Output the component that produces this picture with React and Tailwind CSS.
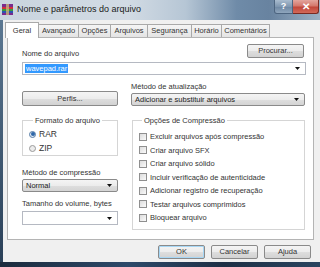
const Arrow = () => (
  <svg width="5" height="3" viewBox="0 0 5 3" className="shrink-0">
    <path d="M0 0H5L2.5 3Z" fill="#111" />
  </svg>
);

const Btn = ({ children, className = "" }) => (
  <div
    className={
      "flex items-center justify-center rounded-[2px] border border-[#8a8a8a] bg-[linear-gradient(#f4f4f4_0%,#ececec_50%,#dedede_51%,#d2d2d2_100%)] text-[7.5px] leading-none text-[#333] " +
      className
    }
  >
    {children}
  </div>
);

const GrayCombo = ({ children, className = "" }) => (
  <div
    className={
      "flex items-center justify-between rounded-[2px] border border-[#8a8a8a] bg-[linear-gradient(#f4f4f4_0%,#ececec_50%,#dedede_51%,#d4d4d4_100%)] pl-[3px] pr-[5px] text-[7.5px] leading-none text-[#222] " +
      className
    }
  >
    <span>{children}</span>
    <Arrow />
  </div>
);

const WhiteCombo = ({ children, className = "" }) => (
  <div
    className={
      "flex items-center justify-between border border-[#b5b9c2] bg-white pl-[2px] pr-[5px] text-[7.5px] leading-none " +
      className
    }
  >
    <span>{children}</span>
    <Arrow />
  </div>
);

const Check = ({ label }) => (
  <div className="flex h-[13.5px] items-center">
    <div className="h-[8px] w-[8px] border border-[#8f8f8f] bg-[linear-gradient(135deg,#dcdcdc,#fafafa)]" />
    <span className="ml-[3px] text-[7.5px] leading-none text-[#333]">{label}</span>
  </div>
);

const Radio = ({ label, checked }) => (
  <div className="flex h-[14px] items-center">
    <div
      className={
        "flex h-[7px] w-[7px] items-center justify-center rounded-full border " +
        (checked ? "border-[#5b7fa8] bg-[#dfe9f4]" : "border-[#9a9a9a] bg-[#ececec]")
      }
    >
      {checked && <div className="h-[4px] w-[4px] rounded-full bg-[#2f67a8]" />}
    </div>
    <span className="ml-[3px] text-[8.5px] leading-none text-[#333]">{label}</span>
  </div>
);

const Tab = ({ children, w }) => (
  <div
    className={
      "-ml-px flex h-[13px] items-center justify-center border border-b-0 border-[#a9a9a9] bg-[linear-gradient(#f5f5f5,#e4e4e4)] text-[7.5px] leading-none text-[#333] " +
      w
    }
  >
    {children}
  </div>
);

export default function App() {
  return (
    <div className="flex h-[267px] w-[320px] flex-col overflow-hidden bg-[#f0f0f0] font-['Liberation_Sans',Arial,sans-serif] text-[#222]">
      {/* Title bar */}
      <div className="flex h-[20px] shrink-0 items-start bg-[linear-gradient(90deg,#c9d4de_0%,#d2dbe4_40%,#b6c6d5_58%,#6f8ba8_74%,#6883a0_84%,#9bb0c4_100%)]">
        <svg width="11" height="11" viewBox="0 0 11 11" className="ml-[2px] mt-[4px]">
          <rect x="0" y="0" width="11" height="3" fill="#7a2a8c" />
          <rect x="0" y="3" width="11" height="2" fill="#d0303a" />
          <rect x="0" y="5" width="11" height="2" fill="#3a9a3a" />
          <rect x="0" y="7" width="11" height="2" fill="#2a56b0" />
          <rect x="0" y="9" width="11" height="2" fill="#7a2a8c" />
          <rect x="4" y="0" width="3" height="11" fill="#c9b27a" opacity="0.8" />
        </svg>
        <span className="ml-[4px] mt-[4px] text-[9px] leading-[11px] text-[#1a1a1a]">
          Nome e parâmetros do arquivo
        </span>
        <div className="ml-auto mr-[1px] flex">
          <div className="flex h-[14px] w-[19px] items-center justify-center rounded-bl-[3px] border border-t-0 border-[#4d6580] bg-[linear-gradient(#a9bccf,#7f97b0_50%,#6c86a2_51%,#8fa6bd)] text-[9px] font-bold leading-none text-white">
            ?
          </div>
          <div className="flex h-[14px] w-[26px] items-center justify-center rounded-br-[3px] border border-l-0 border-t-0 border-[#7a2a22] bg-[linear-gradient(#e3a59d,#d4786c_45%,#c2473a_55%,#d26a5a)] text-[10px] font-bold leading-none text-white">
            ✕
          </div>
        </div>
      </div>

      {/* Body */}
      <div className="flex flex-1">
        <div className="w-[3px] bg-[linear-gradient(#5c7892,#2a4058)]" />
        <div className="flex flex-1 flex-col pl-[4px] pr-[6px] pt-[2px]">
          {/* Tabs */}
          <div className="relative z-10 flex h-[15px] items-end">
            <div className="-mb-px -ml-[2px] flex h-[16px] w-[34px] items-center justify-center border border-b-0 border-[#a9a9a9] bg-white text-[7.5px] leading-none text-[#333]">
              Geral
            </div>
            <Tab w="w-[41px] ml-[-1px]">Avançado</Tab>
            <Tab w="w-[33px]">Opções</Tab>
            <Tab w="w-[38px]">Arquivos</Tab>
            <Tab w="w-[45px]">Segurança</Tab>
            <Tab w="w-[31px]">Horário</Tab>
            <Tab w="w-[49px]">Comentários</Tab>
          </div>

          {/* Panel */}
          <div className="flex h-[203px] flex-col border border-[#b4b4b4] bg-white pl-[14px] pr-[7px] pt-[6px]">
            <div className="flex items-end justify-between">
              <span className="text-[7.5px] leading-[9px] text-[#333]">Nome do arquivo</span>
              <Btn className="mr-[2px] h-[14px] w-[57px]">Procurar...</Btn>
            </div>
            <WhiteCombo className="mt-[4px] h-[13px]">
              <span className="bg-[#3399ff] px-[1px] text-white">wavepad.rar</span>
            </WhiteCombo>

            <div className="mt-[7px] grid grid-cols-[96px_174px] gap-x-[13px]">
              <div className="flex flex-col">
                <Btn className="mt-[9px] h-[15px]">Perfis...</Btn>

                <fieldset className="mt-[10px] h-[40px] border border-[#d5d5d5] pl-[6px]">
                  <legend className="ml-[4px] px-[2px] text-[7.5px] leading-[9px] text-[#333]">
                    Formato do arquivo
                  </legend>
                  <div className="mt-[2px]">
                    <Radio label="RAR" checked />
                    <Radio label="ZIP" />
                  </div>
                </fieldset>

                <span className="mt-[12px] text-[7.5px] leading-[9px] text-[#333]">Método de compressão</span>
                <GrayCombo className="mt-[2px] h-[13px]">Normal</GrayCombo>
                <span className="mt-[7px] text-[7.5px] leading-[9px] text-[#333]">Tamanho do volume, bytes</span>
                <WhiteCombo className="mt-[3px] h-[14px]" />
              </div>

              <div className="flex flex-col">
                <span className="text-[7.5px] leading-[9px] text-[#333]">Método de atualização</span>
                <GrayCombo className="mt-[2px] h-[13px]">Adicionar e substituir arquivos</GrayCombo>

                <fieldset className="ml-[1px] mt-[10px] h-[114px] border border-[#d5d5d5] pl-[6px]">
                  <legend className="ml-[3px] px-[2px] text-[7.5px] leading-[9px] text-[#333]">
                    Opções de Compressão
                  </legend>
                  <div className="mt-[5px]">
                    <Check label="Excluir arquivos após compressão" />
                    <Check label="Criar arquivo SFX" />
                    <Check label="Criar arquivo sólido" />
                    <Check label="Incluir verificação de autenticidade" />
                    <Check label="Adicionar registro de recuperação" />
                    <Check label="Testar arquivos comprimidos" />
                    <Check label="Bloquear arquivo" />
                  </div>
                </fieldset>
              </div>
            </div>
          </div>

          {/* Buttons */}
          <div className="mt-[5px] flex justify-end gap-[6px] pr-[3px]">
            <Btn className="h-[14px] w-[47px] border-[#3c7fb1] shadow-[inset_0_0_0_1px_#a7d7f5]">OK</Btn>
            <Btn className="h-[14px] w-[47px]">Cancelar</Btn>
            <Btn className="h-[14px] w-[47px]">Ajuda</Btn>
          </div>
        </div>
      </div>
      <div className="h-[5px] shrink-0 bg-[linear-gradient(90deg,#1b2a3c,#2d4a6a_40%,#1d2f45_70%,#2a4560)]" />
    </div>
  );
}
